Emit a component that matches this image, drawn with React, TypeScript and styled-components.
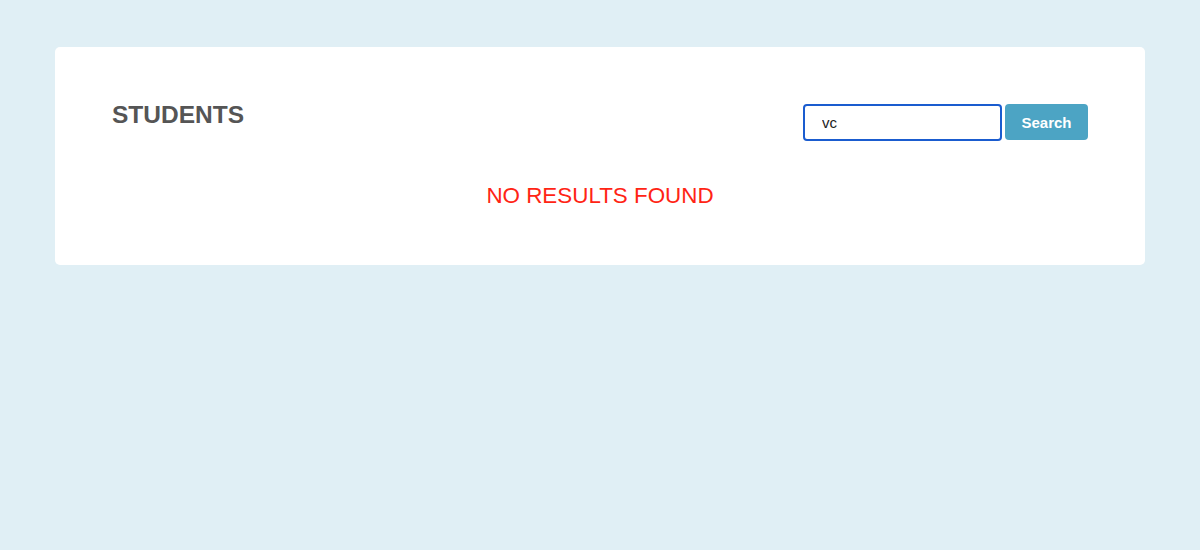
import React, { useState } from "react";
import styled, { createGlobalStyle } from "styled-components";

const GlobalStyle = createGlobalStyle`
  html, body {
    margin: 0;
    padding: 0;
    background: #e0eff5;
    font-family: "Liberation Sans", Arial, sans-serif;
  }
`;

const Page = styled.div`
  padding: 47px 55px;
`;

const Card = styled.div`
  background: #ffffff;
  border-radius: 5px;
  padding: 53px 57px 57px;
`;

const HeaderRow = styled.div`
  display: flex;
  justify-content: space-between;
  align-items: flex-start;
`;

const Title = styled.h2`
  margin: 0;
  font-size: 24.5px;
  line-height: 30px;
  font-weight: bold;
  color: #555555;
`;

const SearchForm = styled.form`
  display: flex;
  gap: 3px;
  margin-top: 4px;
`;

const SearchInput = styled.input`
  box-sizing: border-box;
  width: 199px;
  height: 37px;
  border: 2px solid #1a5ccf;
  border-radius: 4px;
  padding: 0 17px;
  font-family: "Liberation Sans", Arial, sans-serif;
  font-size: 15px;
  color: #222222;
  outline: none;
`;

const SearchButton = styled.button`
  box-sizing: border-box;
  width: 83px;
  height: 36px;
  border: none;
  border-radius: 4px;
  background: #4ca4c4;
  color: #ffffff;
  font-family: "Liberation Sans", Arial, sans-serif;
  font-size: 15px;
  font-weight: bold;
  cursor: pointer;
`;

const Message = styled.p`
  margin: 42px 0 0;
  text-align: center;
  font-size: 22.4px;
  line-height: 25px;
  color: #ff2414;
`;

export default function App() {
  const [query, setQuery] = useState("vc");
  return (
    <>
      <GlobalStyle />
      <Page>
        <Card>
          <HeaderRow>
            <Title>STUDENTS</Title>
            <SearchForm onSubmit={(e) => e.preventDefault()}>
              <SearchInput value={query} onChange={(e) => setQuery(e.target.value)} />
              <SearchButton type="submit">Search</SearchButton>
            </SearchForm>
          </HeaderRow>
          <Message>NO RESULTS FOUND</Message>
        </Card>
      </Page>
    </>
  );
}
